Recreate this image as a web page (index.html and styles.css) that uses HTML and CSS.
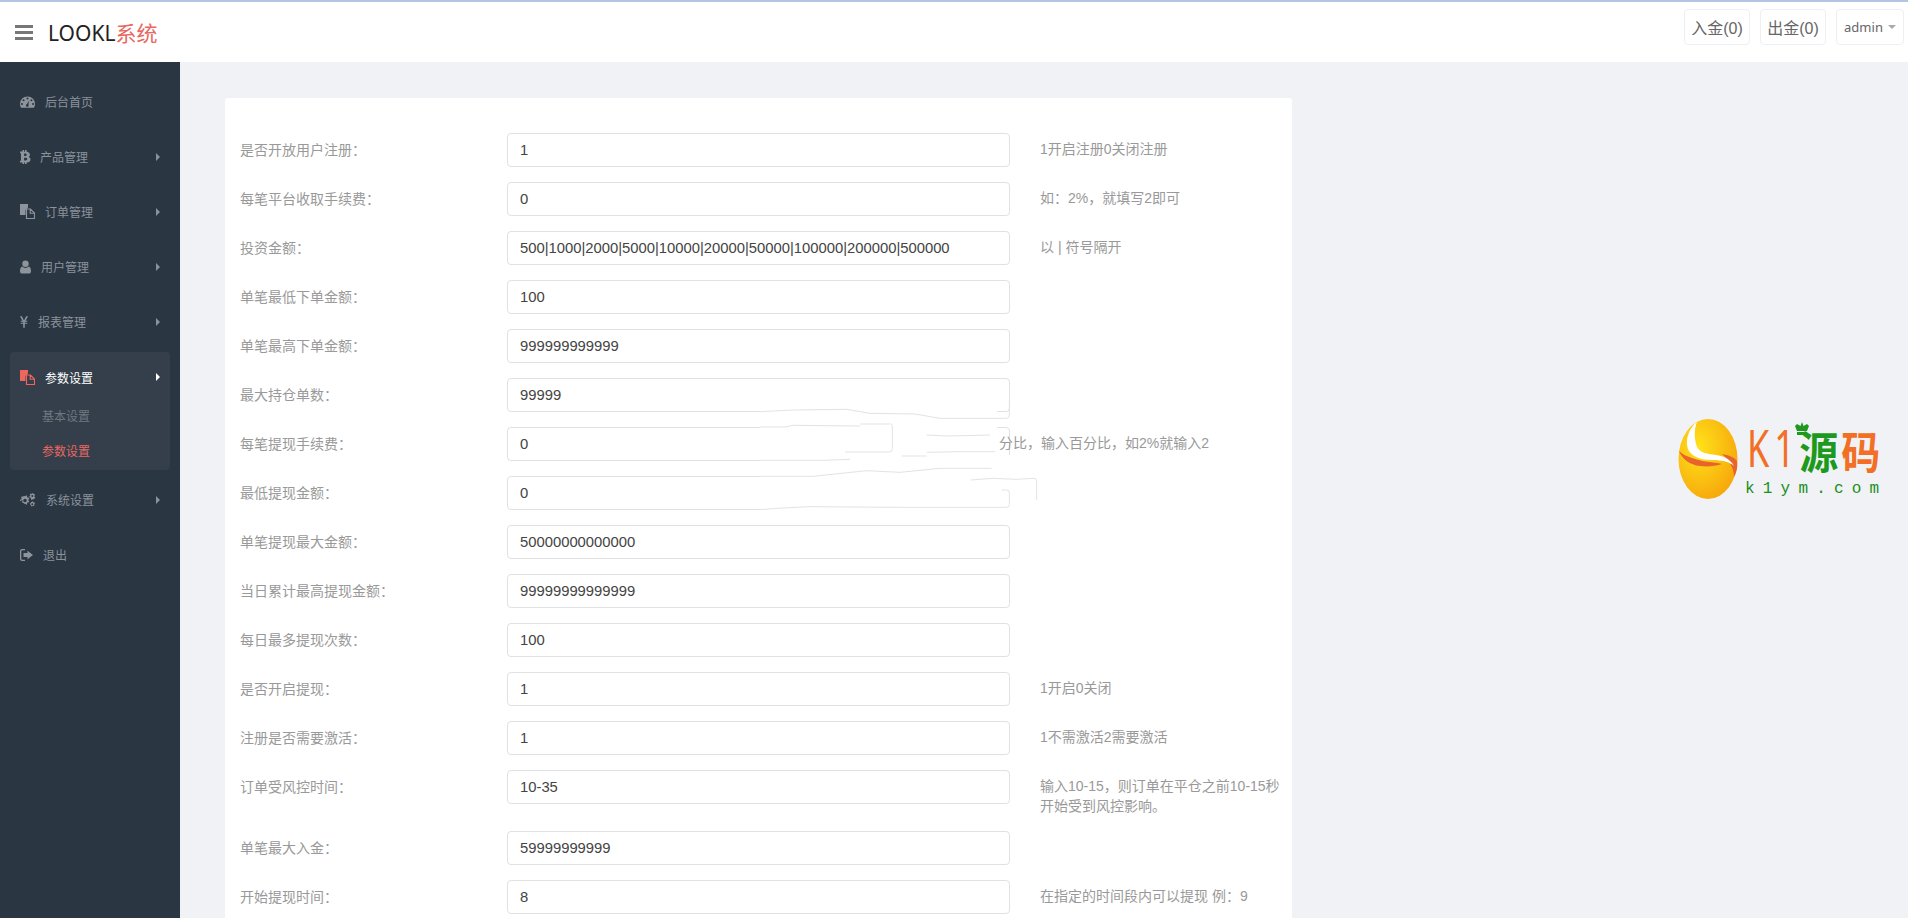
FILE: index.html
```html
<!DOCTYPE html>
<html lang="zh-CN">
<head>
  <meta charset="UTF-8" />
  <title>LOOKL系统</title>
  <link rel="stylesheet" href="styles.css">
</head>
<body>

  <header class="topbar">
    <div class="brand">
      <span class="burger"><i></i><i></i><i></i></span>
      <span class="logo">LOOKL<em>系统</em></span>
    </div>
    <div class="top-actions">
      <a class="top-btn">入金(0)</a>
      <a class="top-btn">出金(0)</a>
      <a class="top-btn top-user">admin <b class="caret"></b></a>
    </div>
  </header>

  <div class="wrap">
    <aside class="sidebar">
      <a class="nav-item">
        <svg class="ico w-dash" viewBox="0 0 16 12"><path fill-rule="evenodd" d="M8 0a8 8 0 0 1 8 8c0 1.500-.4 2.900-1.100 4H1.100A8 8 0 0 1 0 8a8 8 0 0 1 8-8zM8 1.200a1.100 1.100 0 1 0 0 2.200 1.100 1.100 0 0 0 0-2.200zM3.800 3a1.100 1.100 0 1 0 0 2.200 1.100 1.100 0 0 0 0-2.200zM12.200 3a1.100 1.100 0 1 0 0 2.200 1.100 1.100 0 0 0 0-2.200zM2.100 7a1.100 1.100 0 1 0 0 2.200 1.100 1.100 0 0 0 0-2.200zM13.900 7a1.100 1.100 0 1 0 0 2.200 1.100 1.100 0 0 0 0-2.200zM10 4.200L7.400 8.100a1.500 1.500 0 1 0 1.500.4z"/></svg>
        <span>后台首页</span>
      </a>
      <a class="nav-item has-sub">
        <svg class="ico w-btc" viewBox="0 0 11 14"><path fill-rule="evenodd" d="M2.500 0h1.600v1.700h.9V0h1.600v1.800c2 .3 3.300 1.200 3.300 3 0 1-.5 1.700-1.200 2.100 1.100.4 1.800 1.200 1.800 2.500 0 2-1.500 2.900-3.900 3.100V14H5v-1.500h-.9V14H2.500v-1.500H0v-1.700h1V3.200H0V1.600h2.500zM4.100 3.600v2.300h1.100c.9 0 1.500-.3 1.500-1.200s-.6-1.100-1.500-1.100zM4.100 7.700v2.700h1.500c1 0 1.600-.4 1.600-1.400S6.600 7.700 5.600 7.700z"/></svg>
        <span>产品管理</span>
      </a>
      <a class="nav-item has-sub">
        <svg class="ico w-files" viewBox="0 0 15 15"><path d="M0 0h8v3.500L5.500 6v5H0z"/><path class="line" d="M6.500 5h4l4 4v5.500h-8zM10.200 5v4.300h4.300"/></svg>
        <span>订单管理</span>
      </a>
      <a class="nav-item has-sub">
        <svg class="ico w-user" viewBox="0 0 12 14"><circle cx="6" cy="3.500" r="3.500"/><path d="M2.400 6.400c1 1 2.200 1.600 3.600 1.600s2.600-.6 3.600-1.600C11 7 12 8.500 12 11.500c0 1.600-1 2.500-2.500 2.500h-7C1 14 0 13.100 0 11.500 0 8.500 1 7 2.400 6.400z"/></svg>
        <span>用户管理</span>
      </a>
      <a class="nav-item has-sub">
        <svg class="ico w-yen" viewBox="0 0 9 13"><path d="M0 0h2.100l2.400 4.800L6.900 0H9L6.300 5.200H8.200v1.100H5.400v1.100h2.800v1.100H5.400V13H3.600V8.500H.8V7.400h2.800V6.300H.8V5.200h1.900z"/></svg>
        <span>报表管理</span>
      </a>
      <div class="nav-group">
        <a class="nav-item has-sub active">
          <svg class="ico w-files" viewBox="0 0 15 15"><path d="M0 0h8v3.500L5.500 6v5H0z"/><path class="line" d="M6.500 5h4l4 4v5.500h-8zM10.200 5v4.300h4.300"/></svg>
          <span>参数设置</span>
        </a>
        <a class="sub-item">基本设置</a>
        <a class="sub-item current">参数设置</a>
      </div>
      <a class="nav-item has-sub">
        <svg class="ico w-cogs" viewBox="0 0 16 14"><path fill-rule="evenodd" d="M4.500 3l1 .2.600-1 1.300.8-.4 1.100.7.700 1.100-.3.500 1.400-1 .6v1l1 .6-.5 1.400-1.100-.3-.7.700.4 1.100-1.300.8-.6-1-1 .2-.7-1-1 .1-.8-1.200.7-.9-.4-.9L0 8.300V6.700l1.300-.2.400-.9-.7-.9.800-1.200 1 .1zM5 5.700a1.800 1.800 0 1 0 0 3.600 1.800 1.800 0 0 0 0-3.600zM13 0l.6 1 1 .1.300 1-.7.800.2.800.9.600-.2 1-1 .3-.5.900-1.100-.2-.8.600-.8-.7.100-1-.6-.7-1-.1-.2-1 .9-.5.2-1-.5-.8.800-.6.900.5zM12.300 2a1 1 0 1 0 0 2 1 1 0 0 0 0-2zM13 8.500l.6 1 1 .1.300 1-.7.800.2.800-.7.800-1-.3-.7.800-1-.4-.1-1-.8-.5-.2-1 .9-.5.200-1 1-.2.600-.6zM12.300 10.300a1 1 0 1 0 0 2 1 1 0 0 0 0-2z"/></svg>
        <span>系统设置</span>
      </a>
      <a class="nav-item">
        <svg class="ico w-out" viewBox="0 0 13 12"><path fill-rule="evenodd" d="M2 0h3v1.300H2.200c-.5 0-.9.400-.9.900v7.600c0 .5.400.9.900.9H5V12H2c-1.100 0-2-.9-2-2V2C0 .9.900 0 2 0zM7.500 1.800L13 6l-5.500 4.200V8H3.500V4h4z"/></svg>
        <span>退出</span>
      </a>
    </aside>

    <main class="content">
      <form class="panel">
        <div class="row"><label>是否开放用户注册：</label><input value="1"><p class="hint">1开启注册0关闭注册</p></div>
        <div class="row"><label>每笔平台收取手续费：</label><input value="0"><p class="hint">如：2%，就填写2即可</p></div>
        <div class="row"><label>投资金额：</label><input value="500|1000|2000|5000|10000|20000|50000|100000|200000|500000"><p class="hint">以 | 符号隔开</p></div>
        <div class="row"><label>单笔最低下单金额：</label><input value="100"></div>
        <div class="row"><label>单笔最高下单金额：</label><input value="999999999999"></div>
        <div class="row"><label>最大持仓单数：</label><input value="99999"></div>
        <div class="row"><label>每笔提现手续费：</label><input value="0"><p class="hint hint-cut">分比，输入百分比，如2%就输入2</p></div>
        <div class="row"><label>最低提现金额：</label><input value="0"></div>
        <div class="row"><label>单笔提现最大金额：</label><input value="50000000000000"></div>
        <div class="row"><label>当日累计最高提现金额：</label><input value="99999999999999"></div>
        <div class="row"><label>每日最多提现次数：</label><input value="100"></div>
        <div class="row"><label>是否开启提现：</label><input value="1"><p class="hint">1开启0关闭</p></div>
        <div class="row"><label>注册是否需要激活：</label><input value="1"><p class="hint">1不需激活2需要激活</p></div>
        <div class="row row-tall"><label>订单受风控时间：</label><input value="10-35"><p class="hint">输入10-15，则订单在平仓之前10-15秒开始受到风控影响。</p></div>
        <div class="row"><label>单笔最大入金：</label><input value="59999999999"></div>
        <div class="row"><label>开始提现时间：</label><input value="8"><p class="hint">在指定的时间段内可以提现 例：9</p></div>
      </form>

      <!-- 涂抹痕迹 -->
      <svg class="smear" viewBox="0 0 840 360">
        <path class="smear-fill" d="M0 0H712V165H840V345H0z"/>
        <path class="smear-line" d="M0 35L100 30 260 28 330 40 465 42 540 55 600 55 740 55Q748 55 748 45V0"/>
        <path class="smear-line" d="M0 81L75 81 100 76 300 78M300 72H388Q397 70 397 80V146Q397 156 388 156H255"/>
        <path class="smear-line" d="M0 181H190L270 178M425 168H500M500 105L560 108 690 105M500 157L600 155 705 155"/>
        <path class="smear-line" d="M0 229H160L320 212 420 217 540 205H695M632 240L700 235 770 238 822 235Q830 235 830 243V300"/>
        <path class="smear-line" d="M725 270H740Q748 270 748 280V314Q748 322 740 322H600L410 322 150 320 50 325 0 329"/>
      </svg>
    </main>
  </div>

  <div class="watermark">
    <svg class="wm-egg" viewBox="0 0 60 80">
      <defs>
        <radialGradient id="eggfill" cx="35%" cy="35%" r="70%">
          <stop offset="0" stop-color="#ffe21a"/>
          <stop offset="1" stop-color="#f7a80c"/>
        </radialGradient>
      </defs>
      <ellipse cx="30" cy="40" rx="29.500" ry="40" fill="url(#eggfill)"/>
      <path d="M1 32C4 40 12 46 22 47 30 48 38 47 44 45 36 43 24 43 14 39 8 37 4 35 1 32z" fill="#e8642a"/>
      <path d="M44 35C50 36 56 38 59 42 60 50 58 54 56 58 56 50 52 42 44 35z" fill="#e8642a"/>
      <path d="M19 3C10 10 7 22 10 30 13 38 24 41 34 41 44 41 52 43 56 47 52 40 46 37 38 36 30 35 22 34 19 28 16 20 16 10 19 3z" fill="#fff"/>
    </svg>
    <div class="wm-text">
      <div class="wm-title">
        <span class="wm-k">K</span><span class="wm-k wm-one">1</span>
        <svg class="wm-crown" viewBox="0 0 14 13"><path d="M7 0l1.500 4L12 2l2 2-2 5H2L0 4l2-2 3.500 2zM2 10h10v3H2z"/></svg>
        <b>源</b><span class="wm-ma">码</span>
      </div>
      <div class="wm-url">k1ym.com</div>
    </div>
  </div>

</body>
</html>
```

FILE: styles.css
```css
* {
  margin: 0;
  padding: 0;
  box-sizing: border-box;
}

html, body {
  height: 100%;
  overflow: hidden;
}

body {
  font-family: "Liberation Sans", "Noto Sans CJK SC", sans-serif;
  font-size: 14px;
  background: #f0f2f5;
  color: #333;
  border-top: 2px solid #b3c5e2;
}

.topbar {
  height: 60px;
  background: #fff;
  display: flex;
  justify-content: space-between;
  align-items: center;
  padding: 0 4px 0 15px;
}

.brand {
  display: flex;
  align-items: center;
}

.burger {
  width: 18px;
  margin-right: 15px;
  display: flex;
  flex-direction: column;
  gap: 3px;
}

.burger i {
  height: 3px;
  background: #777;
}

.logo {
  font-family: "Noto Sans", "Noto Sans CJK SC", sans-serif;
  font-size: 21px;
  color: #222;
}

.logo em {
  font-style: normal;
  color: #e8685f;
}

.top-actions {
  display: flex;
  gap: 10px;
  margin-top: -10px;
}

.top-btn {
  height: 36px;
  width: 66px;
  border: 1px solid #eeeff2;
  border-radius: 4px;
  font-size: 16px;
  color: #666;
  display: flex;
  justify-content: center;
  align-items: center;
}

.top-user {
  width: 68px;
  font-family: "Noto Sans", sans-serif;
  font-size: 13px;
  gap: 5px;
}

.caret {
  border-top: 4px solid #aaa;
  border-left: 4px solid transparent;
  border-right: 4px solid transparent;
}

.wrap {
  display: flex;
  height: calc(100vh - 62px);
}

.sidebar {
  width: 180px;
  flex-shrink: 0;
  background: #2b3643;
  padding: 12px 10px 0;
  font-size: 12px;
}

.nav-item {
  height: 55px;
  display: flex;
  align-items: center;
  position: relative;
  padding-left: 10px;
  color: #8a929b;
}

.ico {
  fill: #8d949c;
  height: 14px;
  margin-right: 10px;
  flex-shrink: 0;
}

.ico .line {
  fill: none;
  stroke: #8d949c;
  stroke-width: 1.100;
}

.w-dash { width: 15px; height: 12px; }
.w-btc { width: 11px; margin-right: 9px; }
.w-files { width: 15px; height: 15px; }
.w-user { width: 11px; }
.w-yen { width: 8px; }
.w-cogs { width: 16px; }
.w-out { width: 13px; }

.has-sub::after {
  content: "";
  position: absolute;
  right: 10px;
  top: 50%;
  margin-top: -4px;
  border-left: 4px solid #8a929b;
  border-top: 4px solid transparent;
  border-bottom: 4px solid transparent;
}

.nav-group {
  background: #353f4c;
  border-radius: 4px;
  height: 118px;
  margin: 3px 0 2px;
}

.nav-group .nav-item {
  height: 50px;
}

.nav-item.active {
  color: #fff;
}

.nav-item.active .ico {
  fill: #ee665e;
}

.nav-item.active .ico .line {
  stroke: #ee665e;
}

.nav-item.active::after {
  border-left-color: #fff;
}

.sub-item {
  display: block;
  height: 35px;
  line-height: 31px;
  padding-left: 32px;
  color: #6e7781;
}

.sub-item.current {
  color: #e8685f;
}

.content {
  flex: 1;
  padding: 36px 45px;
  position: relative;
  overflow: hidden;
}

.panel {
  width: 1067px;
  background: #fff;
  border-radius: 3px;
  padding: 35px 15px 0;
}

.row {
  display: flex;
  align-items: flex-start;
  min-height: 49px;
}

.row-tall {
  min-height: 61px;
}

.row label {
  width: 267px;
  line-height: 34px;
  color: #999;
  flex-shrink: 0;
}

.row input {
  width: 503px;
  height: 34px;
  border: 1px solid #dfe1e5;
  border-radius: 4px;
  padding: 0 12px;
  font-family: "Liberation Sans", sans-serif;
  font-size: 14.800px;
  color: #444;
  flex-shrink: 0;
}

.hint {
  margin-left: 30px;
  width: 247px;
  flex-shrink: 0;
  color: #999;
  line-height: 20px;
  padding-top: 6px;
}

.hint-cut {
  margin-left: -11px;
  position: relative;
  z-index: 1;
}

/* over the form: x 760, y 400 on the page */
.smear {
  position: absolute;
  left: 580px;
  top: 338px;
  width: 280px;
  height: 120px;
}

.smear-fill {
  fill: #fff;
}

.smear-line {
  fill: none;
  stroke: #e2e3e6;
  stroke-width: 3;
}

.watermark {
  position: absolute;
  left: 1678px;
  top: 419px;
  display: flex;
  gap: 7px;
}

.wm-egg {
  width: 60px;
  height: 80px;
}

.wm-title {
  display: flex;
  align-items: center;
  height: 60px;
  font-family: "Noto Sans CJK SC", sans-serif;
  font-size: 39px;
  line-height: 60px;
  color: #f26f25;
  white-space: nowrap;
  position: relative;
}

.wm-k {
  font-family: "Noto Sans", sans-serif;
  font-size: 36px;
  margin-left: 2px;
  transform: scaleY(1.400);
  display: inline-block;
}

.wm-one {
  margin-left: 5px;
  width: 25px;
}

.wm-crown {
  position: absolute;
  left: 50px;
  top: 3px;
  width: 14px;
  height: 13px;
  fill: #1d9a1d;
}

.wm-title b {
  color: #1d9a1d;
  font-weight: 700;
  transform: scaleY(1.150);
  display: inline-block;
}

.wm-ma {
  margin-left: 3px;
  font-weight: 700;
  transform: scaleY(1.150);
  display: inline-block;
}

.wm-url {
  font-family: "Liberation Mono", monospace;
  font-size: 16px;
  color: #1a8f1a;
  letter-spacing: 8.200px;
  line-height: 20px;
}
```
